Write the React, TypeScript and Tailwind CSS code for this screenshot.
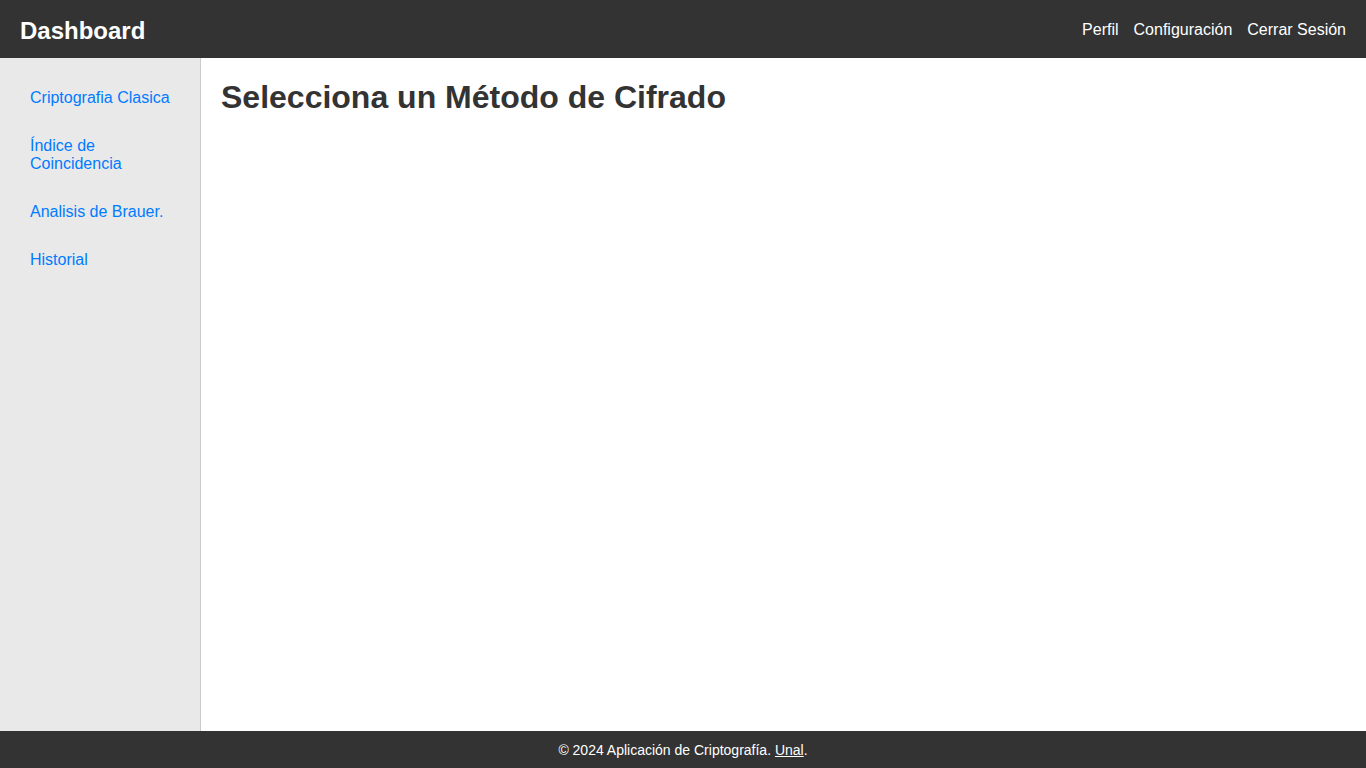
export default function App() {
  const links = ['Criptografia Clasica', 'Índice de Coincidencia', 'Analisis de Brauer.', 'Historial'];

  return (
    <div className="h-screen flex flex-col font-['Liberation_Sans',Arial,sans-serif] text-[#333]">
      <header className="h-[58px] shrink-0 bg-[#333] text-white flex items-center justify-between px-5 pt-[2px]">
        <h1 className="text-2xl font-bold pt-[2px]">Dashboard</h1>
        <nav className="flex gap-[15px] text-base">
          <a href="#">Perfil</a>
          <a href="#">Configuración</a>
          <a href="#">Cerrar Sesión</a>
        </nav>
      </header>

      <div className="flex flex-1 min-h-0">
        <aside className="w-[201px] shrink-0 bg-[#e9e9e9] border-r border-[#ccc] px-5 pt-[21px] pb-5">
          <ul>
            {links.map((l) => (
              <li key={l} className="py-[10px] px-[10px] mb-[10px] w-[160px] text-[16px] leading-[18px]">
                <a href="#" className="text-[#007bff]">{l}</a>
              </li>
            ))}
          </ul>
        </aside>
        <main className="flex-1 p-5">
          <h2 className="text-[32px] font-bold leading-[37px] mt-px">Selecciona un Método de Cifrado</h2>
        </main>
      </div>

      <footer className="h-[37px] shrink-0 bg-[#333] text-white text-sm flex items-center justify-center">
        <p>
          © 2024 Aplicación de Criptografía. <a href="#" className="underline">Unal</a>.
        </p>
      </footer>
    </div>
  );
}
